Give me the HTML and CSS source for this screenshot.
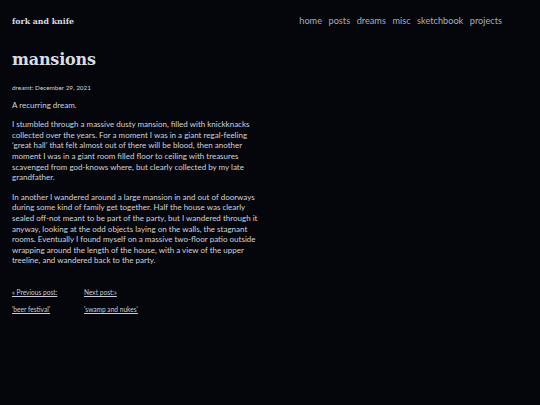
FILE: index.html
```html
<!DOCTYPE html>
<html>
<head>
<meta charset="utf-8">
<link rel="stylesheet" href="styles.css">
</head>
<body>
<header class="site-header">
  <a class="site-title" href="#">fork and knife</a>
  <nav class="nav">
    <a href="#">home</a>
    <a href="#">posts</a>
    <a href="#">dreams</a>
    <a href="#">misc</a>
    <a href="#">sketchbook</a>
    <a href="#">projects</a>
  </nav>
</header>
<main class="post">
  <h1 class="post-title">mansions</h1>
  <p class="post-date">dreamt: December 29, 2021</p>
  <p>A recurring dream.</p>
  <p>I stumbled through a massive dusty mansion, filled with knickknacks collected over the years. For a moment I was in a giant regal-feeling ‘great hall’ that felt almost out of there will be blood, then another moment I was in a giant room filled floor to ceiling with treasures scavenged from god-knows where, but clearly collected by my late grandfather.</p>
  <p>In another I wandered around a large mansion in and out of doorways during some kind of family get together. Half the house was clearly sealed off-not meant to be part of the party, but I wandered through it anyway, looking at the odd objects laying on the walls, the stagnant rooms. Eventually I found myself on a massive two-floor patio outside wrapping around the length of the house, with a view of the upper treeline, and wandered back to the party.</p>
  <div class="pager">
    <div class="pager-col">
      <a href="#">« Previous post:</a>
      <a href="#">'beer festival'</a>
    </div>
    <div class="pager-col">
      <a href="#">Next post:»</a>
      <a href="#">'swamp and nukes'</a>
    </div>
  </div>
</main>
</body>
</html>
```
FILE: styles.css
```css
html, body {
  margin: 0;
  padding: 0;
  background: #05060b;
}
body {
  width: 540px;
  height: 405px;
  overflow: hidden;
  color: #cfd3da;
  font-family: Lato, "Open Sans", "Liberation Sans", sans-serif;
}
a {
  color: inherit;
  text-decoration: none;
}
.site-header {
  display: flex;
  justify-content: space-between;
  align-items: baseline;
  padding: 15px 38px 0 12px;
}
.site-title {
  font-family: "DejaVu Serif", serif;
  font-weight: bold;
  font-size: 7.8px;
  color: #d6dae0;
}
.nav {
  display: flex;
  gap: 6.5px;
  font-size: 9.2px;
}
.nav a {
  color: #a3acbd;
}
.post {
  width: 246px;
  padding: 0 12px;
}
.post-title {
  font-family: "DejaVu Serif", serif;
  font-weight: bold;
  font-size: 16px;
  letter-spacing: -0.2px;
  margin: 23px 0 12px;
  color: #d6dde6;
  line-height: 22px;
}
.post p {
  font-size: 8px;
  line-height: 10.6px;
  margin: 0 0 9px;
}
.post .post-date {
  font-size: 6.4px;
  margin: 0 0 6px;
}
.pager {
  display: flex;
  margin-top: 22px;
}
.pager-col {
  display: flex;
  flex-direction: column;
  gap: 9px;
  width: 72px;
}
.pager a {
  font-size: 6.6px;
  text-decoration: underline;
  color: #c6cbd4;
}
```
